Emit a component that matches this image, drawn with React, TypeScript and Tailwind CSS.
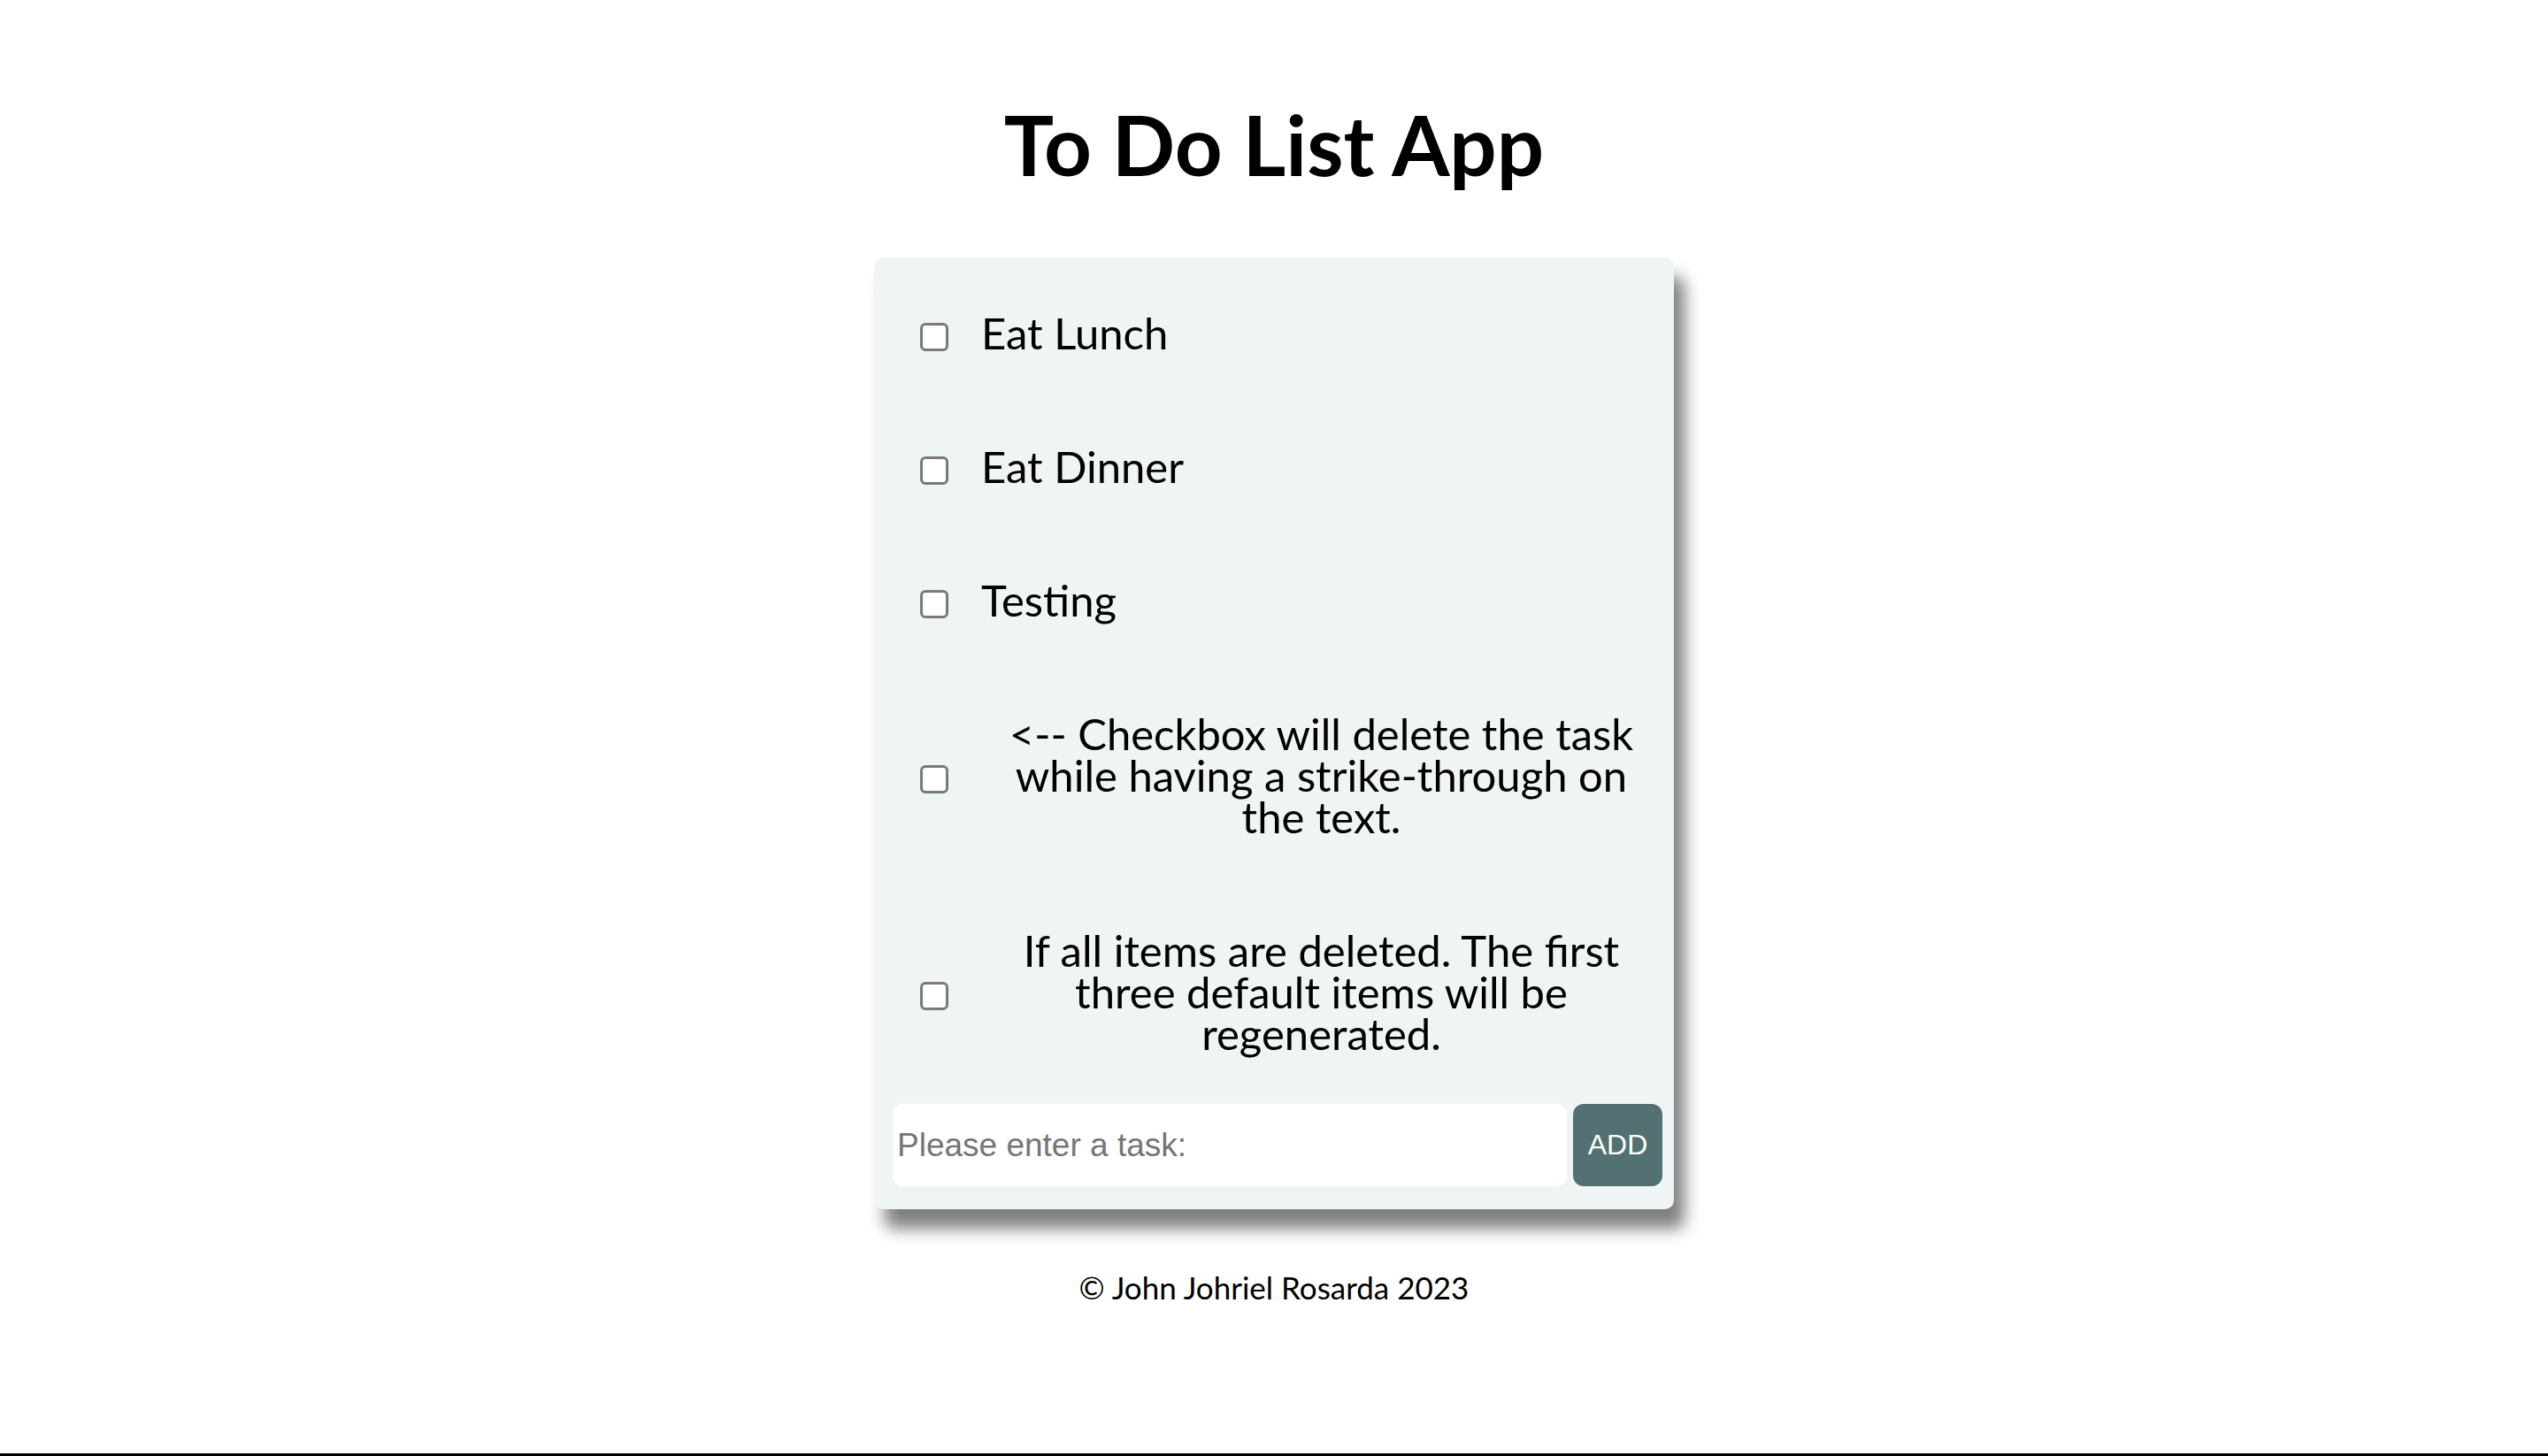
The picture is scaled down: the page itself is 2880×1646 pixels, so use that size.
import { useState } from "react";

const defaultItems = [
  "Eat Lunch",
  "Eat Dinner",
  "Testing",
  "<-- Checkbox will delete the task while having a strike-through on the text.",
  "If all items are deleted. The first three default items will be regenerated.",
];

export default function App() {
  const [items, setItems] = useState<string[]>(defaultItems);
  const [newItem, setNewItem] = useState("");

  const removeItem = (index: number) => {
    const updated = items.filter((_, i) => i !== index);
    setItems(updated.length === 0 ? defaultItems.slice(0, 3) : updated);
  };

  const addItem = () => {
    if (!newItem.trim()) return;
    setItems([...items, newItem]);
    setNewItem("");
  };

  return (
    <main className="h-screen bg-white text-black flex flex-col items-center border-b-[3px] border-black font-['Lato',sans-serif]">
      <h1 className="mt-[116px] text-[94px] font-bold leading-none">To Do List App</h1>

      <div className="mt-[81px] w-[904px] bg-[#eff5f5] rounded-[10px] pt-[14px] pb-[26px] shadow-[12px_22px_18px_rgba(0,0,0,0.5)]">
        {/* Items */}
        {items.map((item, index) => (
          <div key={index} className="flex items-center">
            <input
              type="checkbox"
              onChange={() => removeItem(index)}
              className="appearance-none shrink-0 ml-[52px] w-[32px] h-[32px] bg-white border-[3px] border-[#7a7a7a] rounded-[6px]"
            />
            <p className="pl-[37px] pr-[14px] pt-[48px] pb-[56px] text-[49px] leading-[47px] text-center">
              {item}
            </p>
          </div>
        ))}

        {/* Add form */}
        <div className="flex items-center gap-[7px] pl-[21px] pr-[13px]">
          <input
            type="text"
            placeholder="Please enter a task:"
            value={newItem}
            onChange={(e) => setNewItem(e.target.value)}
            className="flex-1 h-[93px] px-[5px] rounded-[12px] bg-white text-[37px] font-['Liberation_Sans',Arial,sans-serif] placeholder:text-[#757575] focus:outline-none"
          />
          <button
            onClick={addItem}
            className="w-[101px] h-[93px] pb-[2px] rounded-[12px] bg-[#537073] text-white text-[32px] font-['Liberation_Sans',Arial,sans-serif]"
          >
            ADD
          </button>
        </div>
      </div>

      <footer className="mt-[71px] text-[35px] leading-none">© John Johriel Rosarda 2023</footer>
    </main>
  );
}
